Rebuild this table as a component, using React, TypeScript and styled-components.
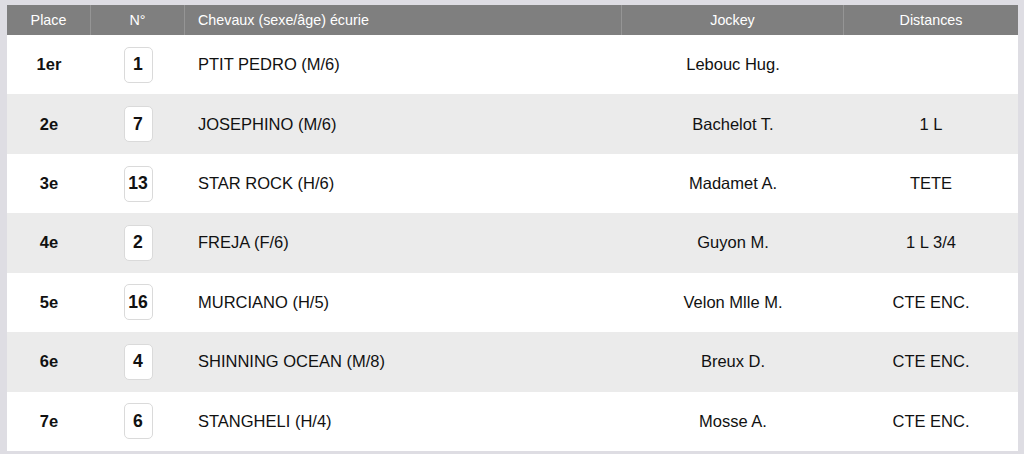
import React from "react";
import styled, { createGlobalStyle } from "styled-components";

const Global = createGlobalStyle`
  html, body { margin: 0; padding: 0; background: #dedde3; }
  body { font-family: "Liberation Sans", Arial, sans-serif; color: #111; }
`;

const Page = styled.div`
  padding: 5px 6px 0 7px;
`;

const Table = styled.div`
  display: grid;
  grid-template-columns: 84px 94px 437px 222px 174px;
  width: 1011px;
`;

const HeadCell = styled.div<{ $align?: "left" | "center"; $last?: boolean }>`
  height: 30px;
  background: #7f7f7f;
  color: #ffffff;
  font-size: 14.3px;
  display: flex;
  align-items: center;
  justify-content: ${(p) => (p.$align === "left" ? "flex-start" : "center")};
  padding-left: ${(p) => (p.$align === "left" ? "13px" : "0")};
  border-right: ${(p) => (p.$last ? "none" : "1px solid #959595")};
  box-sizing: border-box;
`;

const Cell = styled.div<{ $alt: boolean; $align?: "left" | "center"; $bold?: boolean }>`
  height: 59.43px;
  background: ${(p) => (p.$alt ? "#ebebeb" : "#ffffff")};
  display: flex;
  align-items: center;
  justify-content: ${(p) => (p.$align === "left" ? "flex-start" : "center")};
  padding-left: ${(p) => (p.$align === "left" ? "13px" : "0")};
  font-size: 16.5px;
  font-weight: ${(p) => (p.$bold ? 700 : 400)};
  box-sizing: border-box;
`;

const NumBox = styled.div`
  width: 29px;
  height: 36px;
  box-sizing: border-box;
  border: 1px solid #dadada;
  border-radius: 5px;
  background: #fff;
  display: flex;
  align-items: center;
  justify-content: center;
  font-weight: 700;
  font-size: 17.6px;
  color: #111;
`;

const rows = [
  { place: "1er", num: "1", horse: "PTIT PEDRO (M/6)", jockey: "Lebouc Hug.", dist: "" },
  { place: "2e", num: "7", horse: "JOSEPHINO (M/6)", jockey: "Bachelot T.", dist: "1 L" },
  { place: "3e", num: "13", horse: "STAR ROCK (H/6)", jockey: "Madamet A.", dist: "TETE" },
  { place: "4e", num: "2", horse: "FREJA (F/6)", jockey: "Guyon M.", dist: "1 L 3/4" },
  { place: "5e", num: "16", horse: "MURCIANO (H/5)", jockey: "Velon Mlle M.", dist: "CTE ENC." },
  { place: "6e", num: "4", horse: "SHINNING OCEAN (M/8)", jockey: "Breux D.", dist: "CTE ENC." },
  { place: "7e", num: "6", horse: "STANGHELI (H/4)", jockey: "Mosse A.", dist: "CTE ENC." },
];

export default function App() {
  return (
    <>
      <Global />
      <Page>
        <Table>
          <HeadCell>Place</HeadCell>
          <HeadCell>N°</HeadCell>
          <HeadCell $align="left">Chevaux (sexe/âge) écurie</HeadCell>
          <HeadCell>Jockey</HeadCell>
          <HeadCell $last>Distances</HeadCell>
          {rows.map((r, i) => {
            const alt = i % 2 === 1;
            return (
              <React.Fragment key={r.num}>
                <Cell $alt={alt} $bold>{r.place}</Cell>
                <Cell $alt={alt}>
                  <NumBox>{r.num}</NumBox>
                </Cell>
                <Cell $alt={alt} $align="left">{r.horse}</Cell>
                <Cell $alt={alt}>{r.jockey}</Cell>
                <Cell $alt={alt}>{r.dist}</Cell>
              </React.Fragment>
            );
          })}
        </Table>
      </Page>
    </>
  );
}
